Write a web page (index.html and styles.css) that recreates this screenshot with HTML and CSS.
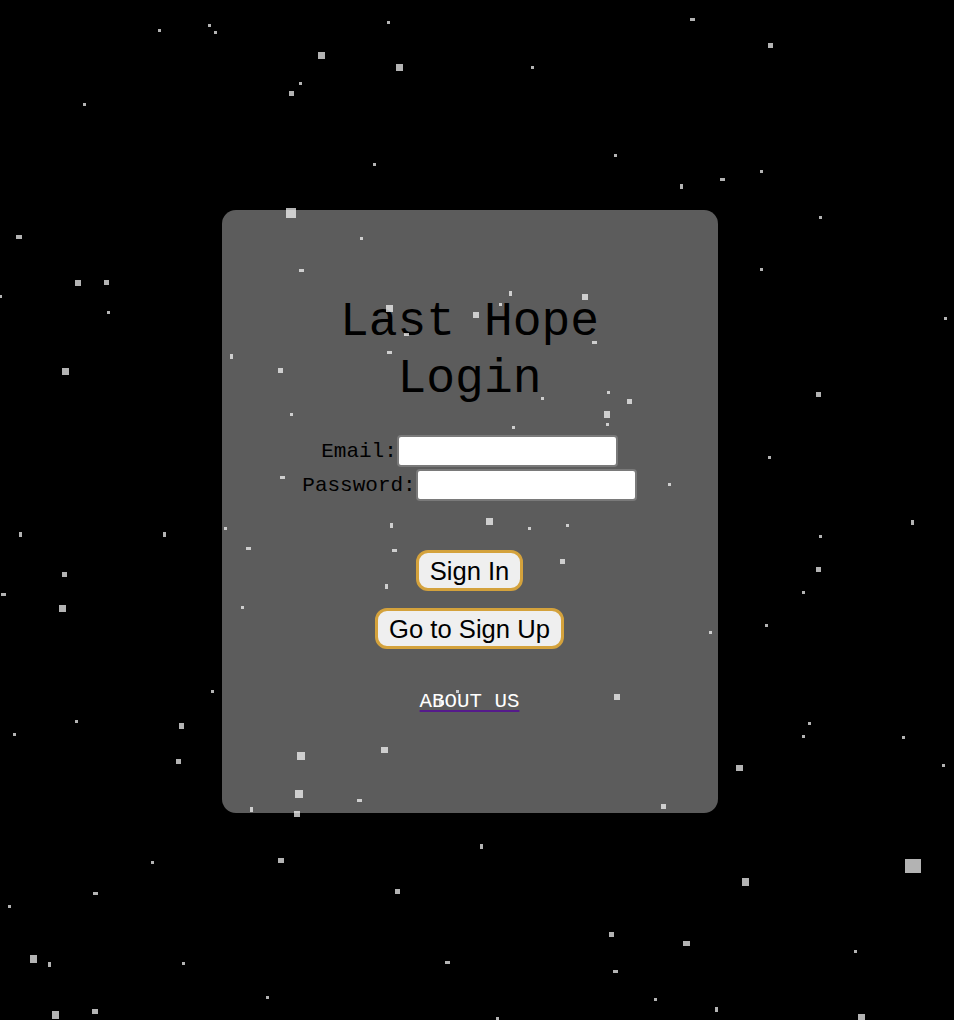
FILE: index.html
```html
<!DOCTYPE html>
<html lang="en">
<head>
<meta charset="utf-8">
<title>Last Hope Login</title>
<link rel="stylesheet" href="styles.css">
</head>
<body>
<div class="page">
  <main class="card">
    <h1 class="title">Last Hope Login</h1>
    <form class="form">
      <div class="field"><label for="email">Email:</label><input id="email" type="email"></div>
      <div class="field"><label for="password">Password:</label><input id="password" type="password"></div>
      <div class="actions">
        <button type="button" class="btn">Sign In</button>
        <button type="button" class="btn">Go to Sign Up</button>
      </div>
    </form>
    <a class="about" href="#about">ABOUT US</a>
  </main>
</div>
<div class="sky" aria-hidden="true">
  <i class="star" style="left:158px;top:29px;width:3px;height:3px"></i>
  <i class="star" style="left:208px;top:24px;width:3px;height:3px"></i>
  <i class="star" style="left:214px;top:31px;width:3px;height:3px"></i>
  <i class="star" style="left:387px;top:21px;width:3px;height:3px"></i>
  <i class="star" style="left:318px;top:52px;width:7px;height:7px"></i>
  <i class="star" style="left:396px;top:64px;width:7px;height:7px"></i>
  <i class="star" style="left:299px;top:82px;width:3px;height:3px"></i>
  <i class="star" style="left:289px;top:91px;width:5px;height:5px"></i>
  <i class="star" style="left:83px;top:103px;width:3px;height:3px"></i>
  <i class="star" style="left:373px;top:163px;width:3px;height:3px"></i>
  <i class="star" style="left:16px;top:235px;width:6px;height:4px"></i>
  <i class="star" style="left:286px;top:208px;width:10px;height:10px"></i>
  <i class="star" style="left:360px;top:237px;width:3px;height:3px"></i>
  <i class="star" style="left:690px;top:18px;width:5px;height:3px"></i>
  <i class="star" style="left:768px;top:43px;width:5px;height:5px"></i>
  <i class="star" style="left:531px;top:66px;width:3px;height:3px"></i>
  <i class="star" style="left:614px;top:154px;width:3px;height:3px"></i>
  <i class="star" style="left:680px;top:184px;width:3px;height:5px"></i>
  <i class="star" style="left:720px;top:178px;width:5px;height:3px"></i>
  <i class="star" style="left:760px;top:170px;width:3px;height:3px"></i>
  <i class="star" style="left:819px;top:216px;width:3px;height:3px"></i>

  <i class="star" style="left:75px;top:280px;width:6px;height:6px"></i>
  <i class="star" style="left:104px;top:280px;width:5px;height:5px"></i>
  <i class="star" style="left:0px;top:295px;width:2px;height:3px"></i>
  <i class="star" style="left:107px;top:311px;width:3px;height:3px"></i>
  <i class="star" style="left:62px;top:368px;width:7px;height:7px"></i>
  <i class="star" style="left:19px;top:532px;width:3px;height:5px"></i>
  <i class="star" style="left:163px;top:532px;width:3px;height:5px"></i>
  <i class="star" style="left:62px;top:572px;width:5px;height:5px"></i>
  <i class="star" style="left:1px;top:593px;width:5px;height:3px"></i>
  <i class="star" style="left:59px;top:605px;width:7px;height:7px"></i>
  <i class="star" style="left:211px;top:690px;width:3px;height:3px"></i>
  <i class="star" style="left:75px;top:720px;width:3px;height:3px"></i>
  <i class="star" style="left:13px;top:733px;width:3px;height:3px"></i>
  <i class="star" style="left:179px;top:723px;width:5px;height:6px"></i>
  <i class="star" style="left:176px;top:759px;width:5px;height:5px"></i>

  <i class="star" style="left:760px;top:268px;width:3px;height:3px"></i>
  <i class="star" style="left:944px;top:317px;width:3px;height:3px"></i>
  <i class="star" style="left:816px;top:392px;width:5px;height:5px"></i>
  <i class="star" style="left:768px;top:456px;width:3px;height:3px"></i>
  <i class="star" style="left:911px;top:520px;width:3px;height:5px"></i>
  <i class="star" style="left:819px;top:535px;width:3px;height:3px"></i>
  <i class="star" style="left:816px;top:567px;width:5px;height:5px"></i>
  <i class="star" style="left:802px;top:591px;width:3px;height:3px"></i>
  <i class="star" style="left:765px;top:624px;width:3px;height:3px"></i>
  <i class="star" style="left:808px;top:722px;width:3px;height:3px"></i>
  <i class="star" style="left:802px;top:735px;width:3px;height:3px"></i>
  <i class="star" style="left:902px;top:736px;width:3px;height:3px"></i>
  <i class="star" style="left:736px;top:765px;width:7px;height:6px"></i>
  <i class="star" style="left:942px;top:764px;width:3px;height:3px"></i>

  <i class="star" style="left:250px;top:807px;width:3px;height:5px"></i>
  <i class="star" style="left:294px;top:811px;width:6px;height:6px"></i>
  <i class="star" style="left:151px;top:861px;width:3px;height:3px"></i>
  <i class="star" style="left:278px;top:858px;width:6px;height:5px"></i>
  <i class="star" style="left:93px;top:892px;width:5px;height:3px"></i>
  <i class="star" style="left:8px;top:905px;width:3px;height:3px"></i>
  <i class="star" style="left:395px;top:889px;width:5px;height:5px"></i>
  <i class="star" style="left:30px;top:955px;width:7px;height:8px"></i>
  <i class="star" style="left:48px;top:962px;width:3px;height:5px"></i>
  <i class="star" style="left:182px;top:962px;width:3px;height:3px"></i>
  <i class="star" style="left:445px;top:961px;width:5px;height:3px"></i>
  <i class="star" style="left:266px;top:996px;width:3px;height:3px"></i>
  <i class="star" style="left:52px;top:1011px;width:7px;height:8px"></i>
  <i class="star" style="left:92px;top:1009px;width:6px;height:5px"></i>
  <i class="star" style="left:661px;top:804px;width:5px;height:5px"></i>
  <i class="star" style="left:480px;top:844px;width:3px;height:5px"></i>
  <i class="star" style="left:905px;top:859px;width:16px;height:14px"></i>
  <i class="star" style="left:742px;top:878px;width:7px;height:8px"></i>
  <i class="star" style="left:609px;top:932px;width:5px;height:5px"></i>
  <i class="star" style="left:683px;top:941px;width:7px;height:5px"></i>
  <i class="star" style="left:854px;top:950px;width:3px;height:3px"></i>
  <i class="star" style="left:613px;top:970px;width:5px;height:3px"></i>
  <i class="star" style="left:654px;top:998px;width:3px;height:3px"></i>
  <i class="star" style="left:715px;top:1007px;width:3px;height:5px"></i>
  <i class="star" style="left:858px;top:1014px;width:7px;height:6px"></i>
  <i class="star" style="left:496px;top:1017px;width:3px;height:3px"></i>

  <i class="star" style="left:299px;top:269px;width:5px;height:3px"></i>
  <i class="star" style="left:509px;top:291px;width:3px;height:5px"></i>
  <i class="star" style="left:582px;top:294px;width:6px;height:6px"></i>
  <i class="star" style="left:386px;top:305px;width:7px;height:7px"></i>
  <i class="star" style="left:499px;top:303px;width:3px;height:3px"></i>
  <i class="star" style="left:473px;top:312px;width:6px;height:6px"></i>
  <i class="star" style="left:404px;top:333px;width:5px;height:3px"></i>
  <i class="star" style="left:592px;top:341px;width:5px;height:3px"></i>
  <i class="star" style="left:387px;top:351px;width:5px;height:3px"></i>
  <i class="star" style="left:230px;top:354px;width:3px;height:5px"></i>
  <i class="star" style="left:278px;top:368px;width:5px;height:5px"></i>
  <i class="star" style="left:607px;top:391px;width:3px;height:3px"></i>
  <i class="star" style="left:627px;top:399px;width:5px;height:5px"></i>
  <i class="star" style="left:541px;top:397px;width:3px;height:3px"></i>
  <i class="star" style="left:290px;top:413px;width:3px;height:3px"></i>
  <i class="star" style="left:604px;top:411px;width:6px;height:7px"></i>
  <i class="star" style="left:512px;top:426px;width:3px;height:3px"></i>
  <i class="star" style="left:606px;top:423px;width:3px;height:3px"></i>
  <i class="star" style="left:280px;top:476px;width:5px;height:3px"></i>
  <i class="star" style="left:390px;top:523px;width:3px;height:5px"></i>
  <i class="star" style="left:486px;top:518px;width:7px;height:7px"></i>
  <i class="star" style="left:528px;top:527px;width:3px;height:3px"></i>
  <i class="star" style="left:566px;top:524px;width:3px;height:3px"></i>
  <i class="star" style="left:392px;top:549px;width:5px;height:3px"></i>
  <i class="star" style="left:560px;top:559px;width:5px;height:5px"></i>
  <i class="star" style="left:385px;top:584px;width:3px;height:5px"></i>
  <i class="star" style="left:456px;top:690px;width:3px;height:3px"></i>
  <i class="star" style="left:439px;top:700px;width:5px;height:5px"></i>
  <i class="star" style="left:614px;top:694px;width:6px;height:6px"></i>
  <i class="star" style="left:297px;top:752px;width:8px;height:8px"></i>
  <i class="star" style="left:381px;top:747px;width:7px;height:6px"></i>
  <i class="star" style="left:295px;top:790px;width:8px;height:8px"></i>
  <i class="star" style="left:357px;top:799px;width:5px;height:3px"></i>
  <i class="star" style="left:246px;top:547px;width:5px;height:3px"></i>
  <i class="star" style="left:241px;top:606px;width:3px;height:3px"></i>
  <i class="star" style="left:709px;top:631px;width:3px;height:3px"></i>
  <i class="star" style="left:668px;top:483px;width:3px;height:3px"></i>
  <i class="star" style="left:224px;top:527px;width:3px;height:3px"></i>
</div>
</body>
</html>
```

FILE: styles.css
```css
html, body {
  margin: 0;
  padding: 0;
}

body {
  background: #000;
  min-height: 1020px;
  position: relative;
  overflow: hidden;
  font-family: "Courier New", Courier, "Nimbus Mono PS", FreeMono, "Liberation Mono", monospace;
}

.page {
  width: 939px;
  padding-top: 210px;
  display: flex;
  justify-content: center;
}

.card {
  box-sizing: border-box;
  width: 496px;
  height: 603px;
  background: #5c5c5c;
  border-radius: 14px;
  padding-top: 84px;
  display: flex;
  flex-direction: column;
  align-items: center;
}

.title {
  margin: 0;
  max-width: 320px;
  font-family: "Courier New", Courier, "Nimbus Mono PS", FreeMono, "Liberation Mono", monospace;
  font-weight: normal;
  font-size: 48px;
  line-height: 57px;
  color: #000;
  text-align: center;
}

.form {
  margin: 27px 0 0;
  display: flex;
  flex-direction: column;
  align-items: center;
  gap: 2px;
}

.field {
  display: flex;
  align-items: center;
  justify-content: center;
  height: 32px;
}

.field label {
  font-family: "Courier New", Courier, "Nimbus Mono PS", FreeMono, "Liberation Mono", monospace;
  font-size: 21px;
  color: #000;
}

.field input {
  box-sizing: border-box;
  width: 221px;
  height: 32px;
  margin: 0;
  padding: 0 4px;
  background: #fff;
  border: 2px solid #7a7a7a;
  border-radius: 4px;
  font-size: 16px;
}

.actions {
  margin-top: 47px;
  display: flex;
  flex-direction: column;
  align-items: center;
  gap: 17px;
}

.btn {
  box-sizing: border-box;
  height: 41px;
  margin: 0;
  padding: 1px 11px 0;
  background: #efefef;
  border: 3px solid #d4a23c;
  border-radius: 12px;
  font-family: "Liberation Sans", Arial, sans-serif;
  font-size: 25.6px;
  line-height: 34px;
  color: #000;
}

.about {
  margin-top: 41px;
  font-family: "Courier New", Courier, "Nimbus Mono PS", FreeMono, "Liberation Mono", monospace;
  font-size: 20.8px;
  color: #fff;
  text-decoration: underline;
  text-decoration-color: #551a8b;
  text-decoration-thickness: 2px;
  text-underline-offset: 3px;
}

.sky {
  position: absolute;
  inset: 0;
  z-index: 2;
  pointer-events: none;
}

.star {
  position: absolute;
  display: block;
  background: rgba(255, 255, 255, 0.7);
}
```
